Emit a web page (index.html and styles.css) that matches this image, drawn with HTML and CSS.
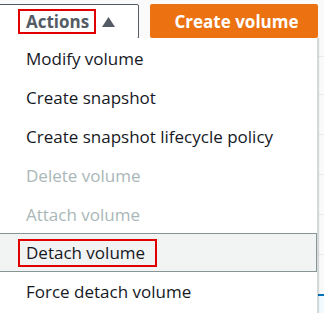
FILE: index.html
```html
<!DOCTYPE html>
<html>
<head>
<meta charset="utf-8">
<link rel="stylesheet" href="styles.css">
</head>
<body>
<div class="page">
  <div class="header">
    <div class="actions-btn">
      <span class="actions-label">Actions</span>
      <svg class="caret" width="13" height="10" viewBox="0 0 13 10"><polygon points="6.5,0 13,10 0,10" fill="#545b64"/></svg>
    </div>
    <div class="create-btn">Create volume</div>
  </div>
  <div class="body-row">
    <ul class="menu">
      <li class="item">Modify volume</li>
      <li class="item">Create snapshot</li>
      <li class="item">Create snapshot lifecycle policy</li>
      <li class="item disabled">Delete volume</li>
      <li class="item disabled">Attach volume</li>
      <li class="item active"><span class="mark">Detach volume</span></li>
      <li class="item">Force detach volume</li>
    </ul>
    <div class="table-strip">
      <div class="trow first"></div>
      <div class="trow"></div>
      <div class="trow"></div>
      <div class="trow"></div>
      <div class="trow"></div>
      <div class="trow"></div>
      <div class="trow selected"></div>
    </div>
  </div>
</div>
</body>
</html>
```
FILE: styles.css
```css
* { box-sizing: border-box; }
html, body { margin: 0; padding: 0; }
body {
  width: 324px;
  height: 313px;
  overflow: hidden;
  background: #ffffff;
  font-family: "Open Sans", "Noto Sans", Arial, sans-serif;
}
.page { width: 324px; height: 313px; overflow: hidden; }
.header {
  height: 38px;
  padding-top: 4px;
  display: flex;
  background: #fafafa;
}
.actions-btn {
  margin-left: -6px;
  width: 145px;
  height: 35px;
  border: 1px solid #545b64;
  border-radius: 2px;
  background: #ffffff;
  display: flex;
  align-items: center;
  padding-left: 23px;
}
.actions-label {
  font-weight: 700;
  font-size: 17px;
  color: #545b64;
  border: 2px solid #e00000;
  padding: 0 5px 0 6px;
  height: 25px;
  line-height: 21px;
}
.caret { margin-left: 6px; }
.create-btn {
  margin-left: 11px;
  width: 168px;
  height: 34px;
  background: #ec7211;
  border-radius: 2px;
  color: #ffffff;
  font-weight: 700;
  font-size: 17px;
  display: flex;
  align-items: center;
  justify-content: center;
  padding-left: 5px;
}
.body-row {
  display: flex;
  height: 275px;
  overflow: hidden;
}
.menu {
  list-style: none;
  margin: 0 0 0 -4px;
  padding: 1px 0 0 0;
  width: 322px;
  background: #ffffff;
  border-right: 1px solid #d5dbdb;
  box-shadow: 1px 0 1px rgba(0,22,22,0.15);
  position: relative;
  z-index: 1;
}
.item {
  height: 39px;
  line-height: 39px;
  padding-left: 30px;
  font-size: 17px;
  color: #16191f;
  white-space: nowrap;
}
.item:nth-child(5) { height: 38px; }
.item.disabled { color: #aab7b8; }
.item.active {
  background: #f2f3f3;
  border: 1px solid #879596;
  padding-left: 21px;
  line-height: 37px;
}
.mark {
  display: inline-block;
  border: 2px solid #e00000;
  height: 28px;
  line-height: 24px;
  padding: 0 10px 0 6px;
  color: #16191f;
}
.table-strip {
  flex: 1;
  background: #fafafa;
  padding-top: 18px;
}
.trow {
  height: 40px;
  border-top: 1px solid #eaeded;
}
.trow.first { height: 38px; }
.trow.selected {
  border-top: 2px solid #0073bb;
  background: #f1faff;
}
```
